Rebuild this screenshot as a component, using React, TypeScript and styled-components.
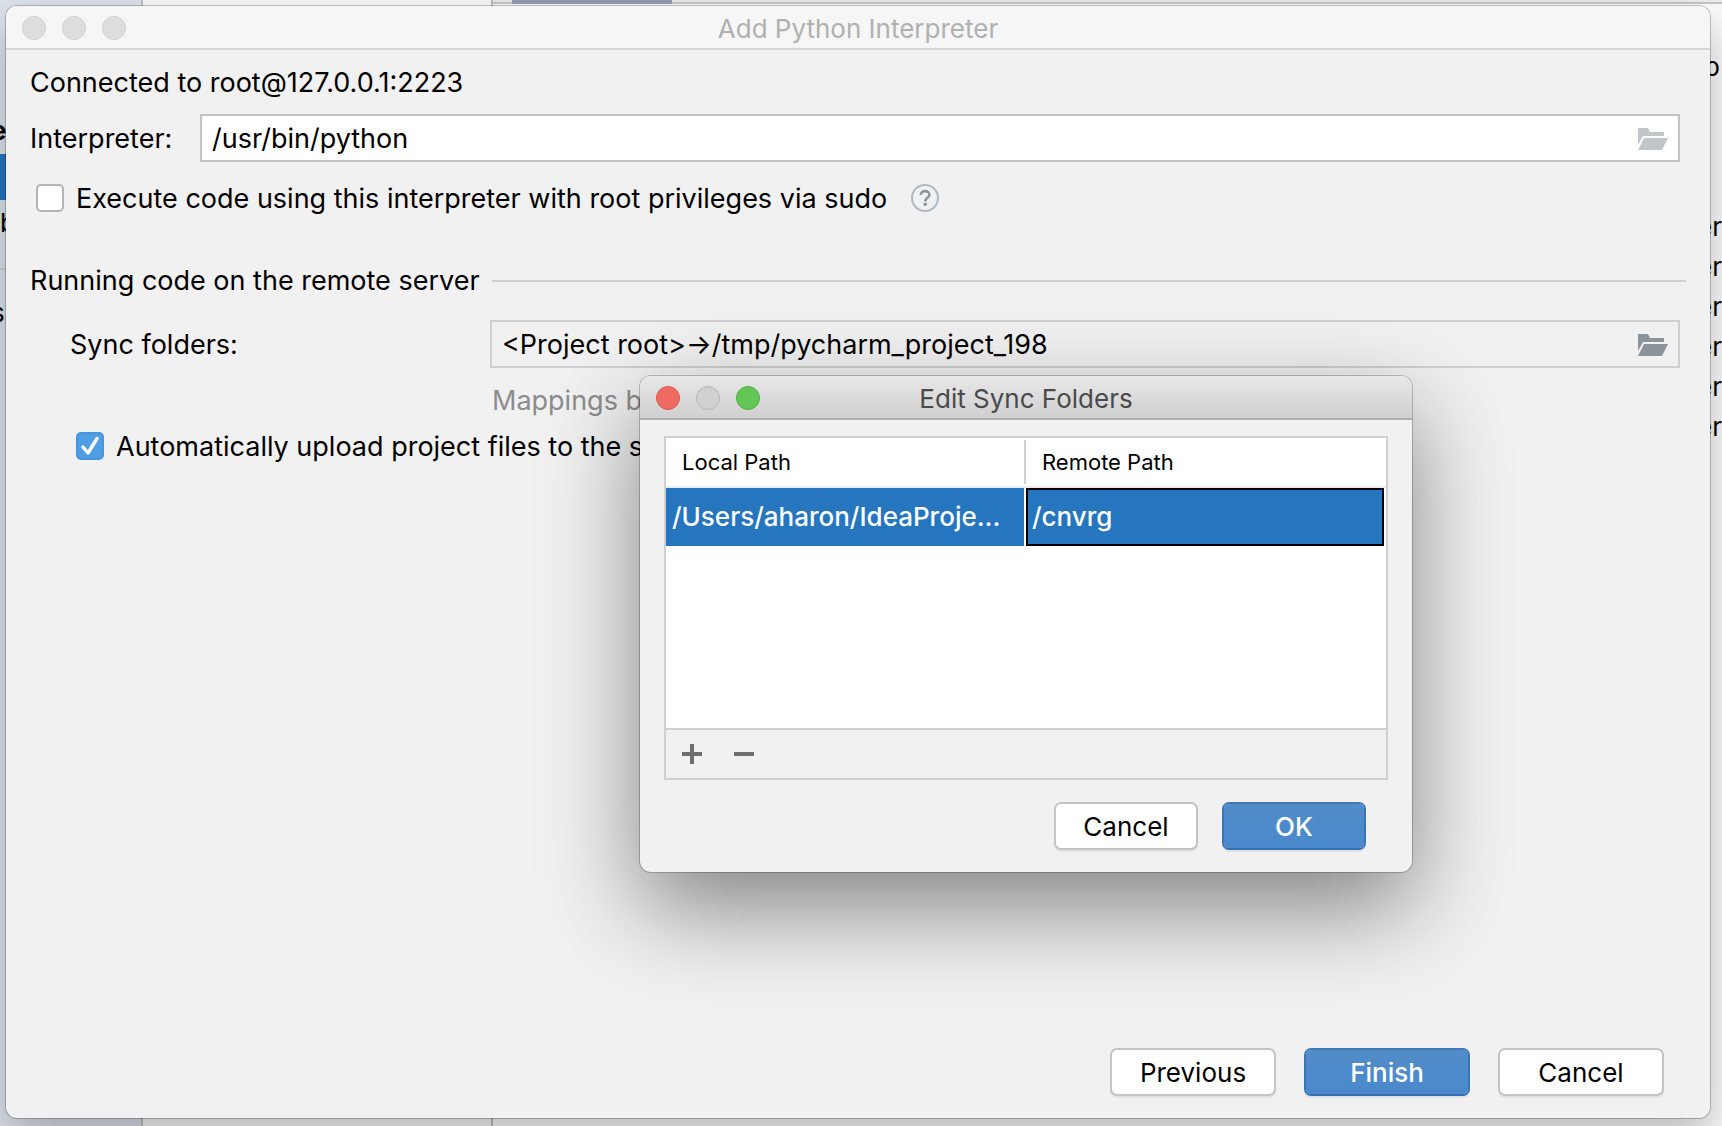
import React from "react";
import styled, { createGlobalStyle, css } from "styled-components";

const GlobalStyle = createGlobalStyle`
  *, *::before, *::after { box-sizing: border-box; }
  body {
    margin: 0;
    overflow: hidden;
    color: #000;
    font: 26px/32px Inter, "Liberation Sans", sans-serif;
  }
  input, button { font: inherit; color: inherit; }
`;

const Desktop = styled.div`
  display: flex;
  position: relative;
  height: 100vh;
  background: #f1f1f1;
`;

const BackSidebar = styled.div`
  width: 143px;
  padding-top: 108px;
  overflow: hidden;
  border-right: 2px solid #c0c0c0;
  background: #dbe2e8;
`;

const SidebarItem = styled.div<{ $selected?: boolean; $bold?: boolean; $scrolled?: boolean }>`
  display: flex;
  align-items: center;
  height: 46px;
  text-indent: ${(p) => (p.$scrolled ? -9 : 0)}px;
  font-weight: ${(p) => (p.$bold ? 700 : 400)};
  background: ${(p) => (p.$selected ? "#2675bf" : "transparent")};
`;

const SidebarRule = styled.div`
  height: 2px;
  margin: 22px 0 20px;
  background: #d0d0d0;
`;

const BackList = styled.div`
  width: 350px;
  border-right: 2px solid #bdbdbd;
  background: #f8f8f8;
`;

const BackPane = styled.div`
  flex: 1;
  overflow: hidden;
  background: #fafafa;
`;

const TabStrip = styled.div`
  height: 4px;
  padding-left: 19px;
  border-bottom: 2px solid #c4c4c4;
  background: #ececec;
`;

const ActiveTab = styled.div`
  width: 160px;
  height: 4px;
  background: #929cb1;
`;

const BackRows = styled.div`
  display: flex;
  flex-direction: column;
  align-items: flex-end;
`;

const BackRow = styled.div<{ $first?: boolean }>`
  height: 40px;
  margin: ${(p) => (p.$first ? "47px 2px 120px 0" : "0")};
`;

const frame = css`
  position: absolute;
  display: flex;
  flex-direction: column;
  overflow: hidden;
  border-radius: 11px;
  background: #f1f1f1;
`;

const MainWindow = styled.main`
  ${frame}
  inset: 6px 12px 8px 6px;
  box-shadow: 0 0 0 1px rgba(0, 0, 0, 0.22), 0 20px 44px rgba(0, 0, 0, 0.26);
`;

const Sheet = styled.section`
  ${frame}
  left: 640px;
  top: 376px;
  width: 772px;
  box-shadow: 0 0 0 1px rgba(0, 0, 0, 0.22), 0 36px 96px rgba(0, 0, 0, 0.46);
`;

const TitleBar = styled.header<{ $active?: boolean }>`
  display: grid;
  grid-template-columns: 1fr auto 1fr;
  align-items: center;
  height: 44px;
  padding: 2px 16px 0;
  color: ${(p) => (p.$active ? "#4a4a4a" : "#b0b0b0")};
  border-bottom: 2px solid ${(p) => (p.$active ? "#aeaeae" : "#d5d5d5")};
  background: ${(p) => (p.$active ? "linear-gradient(#e8e8e8, #cfcfcf)" : "#f6f6f6")};
`;

const Title = styled.h1`
  margin: 0;
  padding-top: 2px;
  font-size: 26px;
  font-weight: 400;
`;

const Lights = styled.div`
  display: flex;
  gap: 16px;
`;

const Light = styled.button<{ $fill: string; $edge: string }>`
  width: 24px;
  height: 24px;
  padding: 0;
  border: 1px solid ${(p) => p.$edge};
  border-radius: 50%;
  background: ${(p) => p.$fill};
`;

const Content = styled.div`
  display: flex;
  flex: 1;
  flex-direction: column;
  padding: 16px 24px 22px;
`;

const Status = styled.p`
  margin: 0;
  padding: 1px 0 15px;
  font-size: 27px;
`;

const Row = styled.div<{ $indent?: boolean }>`
  display: flex;
  align-items: center;
  padding: 0 6px 0 ${(p) => (p.$indent ? 40 : 0)}px;
  font-size: 27px;
`;

const FieldLabel = styled.label<{ $width: number }>`
  flex: 0 0 ${(p) => p.$width}px;
  padding-top: 2px;
`;

const Field = styled.div<{ $muted?: boolean }>`
  display: flex;
  flex: 1;
  align-items: center;
  height: 48px;
  padding: 0 10px;
  border: 2px solid ${(p) => (p.$muted ? "#cfcfcf" : "#c4c4c4")};
  background: ${(p) => (p.$muted ? "transparent" : "#fff")};
`;

const FieldInput = styled.input`
  flex: 1;
  min-width: 0;
  padding: 2px 0 0;
  border: 0;
  outline: 0;
  background: transparent;
`;

const IconButton = styled.button`
  display: flex;
  padding: 0;
  border: 0;
  background: none;
`;

const FolderButton = styled(IconButton)`
  padding-top: 2px;
`;

const CheckRow = styled.div<{ $indent?: boolean }>`
  display: flex;
  align-items: center;
  gap: 12px;
  height: 32px;
  padding-left: ${(p) => (p.$indent ? 46 : 6)}px;
  font-size: 27px;
`;

const CheckLabel = styled.label`
  padding-top: 2px;
  white-space: nowrap;
`;

const CheckBox = styled.input`
  appearance: none;
  width: 28px;
  height: 28px;
  margin: 0;
  border: 2px solid #b4b4b4;
  border-radius: 5px;
  background: #fff;

  &:checked {
    border-color: #4695dd;
    background: #4f9ee3;
  }
`;

const CheckHolder = styled.span`
  display: grid;
  flex: none;

  > * { grid-area: 1 / 1; }
  > svg { pointer-events: none; }
`;

const HelpButton = styled(IconButton)`
  margin-left: 12px;
`;

const SectionHeading = styled.h2`
  display: flex;
  align-items: center;
  gap: 12px;
  margin: 51px 0 23px;
  font-size: 27px;
  font-weight: 400;

  &::after {
    content: "";
    flex: 1;
    height: 2px;
    background: #cfcfcf;
  }
`;

const Hint = styled.p`
  margin: 0;
  padding: 17px 0 13px 462px;
  color: #8c8c8c;
  font-size: 27px;
  white-space: nowrap;
`;

const Actions = styled.footer<{ $gap: number }>`
  display: flex;
  justify-content: flex-end;
  gap: ${(p) => p.$gap}px;
  margin-top: auto;
  padding-right: 22px;
`;

const Button = styled.button<{ $primary?: boolean; $width: number }>`
  width: ${(p) => p.$width}px;
  height: 48px;
  padding: 2px 0 0;
  border: 2px solid #c4c4c4;
  border-radius: 7px;
  background: #fff;
  box-shadow: 0 2px 0 rgba(0, 0, 0, 0.06);

  ${(p) =>
    p.$primary &&
    css`
      color: #fff;
      font-weight: 500;
      border-color: #4079b8 #3a75b6 #346fb3;
      background: linear-gradient(#528cc7, #4989cc) padding-box;
    `}
`;

const SheetBody = styled.div`
  display: flex;
  flex-direction: column;
  gap: 22px;
  padding: 16px 24px 22px;
`;

const TablePanel = styled.div`
  border: 2px solid #d0d0d0;
`;

const TableArea = styled.div`
  height: 290px;
  background: #fff;
`;

const PathTable = styled.table`
  width: 100%;
  table-layout: fixed;
  border-spacing: 0;
`;

const HeadCell = styled.th`
  height: 50px;
  padding: 2px 0;
  font-size: 22px;
  font-weight: 400;
  line-height: 44px;
  text-align: left;
  border-bottom: 2px solid #ececec;
`;

const HeadLabel = styled.div<{ $divided?: boolean }>`
  padding-left: 16px;
  border-right: ${(p) => (p.$divided ? "2px solid #d0d0d0" : "0")};
`;

const Cell = styled.td`
  height: 58px;
  padding: 0;
  color: #fff;
  font-weight: 500;
  border-right: 2px solid #fff;
`;

const CellBox = styled.div<{ $focused?: boolean }>`
  height: 58px;
  padding: 0 4px;
  overflow: hidden;
  line-height: 54px;
  text-overflow: ellipsis;
  white-space: nowrap;
  border: 2px solid ${(p) => (p.$focused ? "#000" : "#2675bf")};
  background: #2675bf;
`;

const TableTools = styled.div`
  display: flex;
  align-items: center;
  gap: 32px;
  height: 50px;
  padding-left: 16px;
  border-top: 2px solid #d0d0d0;
`;

const FolderIcon = ({ color }: { color: string }) => (
  <svg width="30" height="22" viewBox="0 0 30 22" fill={color} aria-hidden="true">
    <path d="M0 0h10l2 4h14v4H5L0 17z" />
    <path d="M6 10h24l-6 12H0z" />
  </svg>
);

const HelpIcon = () => (
  <svg width="28" height="28" viewBox="0 0 28 28" fill="none" aria-hidden="true">
    <circle cx="14" cy="14" r="13" stroke="#afb9c1" strokeWidth="2" />
    <path
      d="M9.8 11c0-2.4 1.8-3.9 4.3-3.9s4.3 1.5 4.3 3.7c0 3-4.2 3.1-4.2 6.6"
      stroke="#8a949c"
      strokeWidth="2.6"
    />
    <rect x="12.6" y="18.8" width="3.2" height="3" fill="#8a949c" />
  </svg>
);

const TickIcon = () => (
  <svg width="28" height="28" viewBox="0 0 28 28" fill="none" aria-hidden="true">
    <path d="M7 15l5 6L21 6.5" stroke="#fff" strokeWidth="3.4" strokeLinecap="round" strokeLinejoin="round" />
  </svg>
);

const PlusIcon = () => (
  <svg width="20" height="20" viewBox="0 0 20 20" fill="#6e6e6e" aria-hidden="true">
    <path d="M8 0h4v8h8v4h-8v8H8v-8H0V8h8z" />
  </svg>
);

const MinusIcon = () => (
  <svg width="20" height="20" viewBox="0 0 20 20" fill="#6e6e6e" aria-hidden="true">
    <path d="M0 8h20v4H0z" />
  </svg>
);

const FieldGroup = styled.div`
  display: flex;
  flex-direction: column;
  gap: 20px;
`;

const idle = { $fill: "#dedede", $edge: "#cfcfcf" };

export default function App() {
  return (
    <>
      <GlobalStyle />
      <Desktop>
        <BackSidebar>
          <SidebarItem $bold $scrolled>e</SidebarItem>
          <SidebarItem $selected />
          <SidebarItem>b</SidebarItem>
          <SidebarRule />
          <SidebarItem $scrolled>s</SidebarItem>
        </BackSidebar>
        <BackList />
        <BackPane>
          <TabStrip>
            <ActiveTab />
          </TabStrip>
          <BackRows>
            <BackRow $first>p</BackRow>
            {[0, 1, 2, 3, 4, 5].map((n) => (
              <BackRow key={n}>er</BackRow>
            ))}
          </BackRows>
        </BackPane>

        <MainWindow>
          <TitleBar>
            <Lights>
              <Light {...idle} aria-label="Close" />
              <Light {...idle} aria-label="Minimize" />
              <Light {...idle} aria-label="Zoom" />
            </Lights>
            <Title>Add Python Interpreter</Title>
          </TitleBar>
          <Content>
            <Status>Connected to root@127.0.0.1:2223</Status>
            <FieldGroup>
              <Row>
                <FieldLabel $width={170} htmlFor="interpreter">Interpreter:</FieldLabel>
                <Field>
                  <FieldInput id="interpreter" defaultValue="/usr/bin/python" />
                  <FolderButton aria-label="Browse interpreter">
                    <FolderIcon color="#c1c6ca" />
                  </FolderButton>
                </Field>
              </Row>
              <CheckRow>
                <CheckBox type="checkbox" id="sudo" />
                <CheckLabel htmlFor="sudo">
                  Execute code using this interpreter with root privileges via sudo
                </CheckLabel>
                <HelpButton aria-label="Help">
                  <HelpIcon />
                </HelpButton>
              </CheckRow>
            </FieldGroup>
            <SectionHeading>Running code on the remote server</SectionHeading>
            <Row $indent>
              <FieldLabel $width={420} htmlFor="sync">Sync folders:</FieldLabel>
              <Field $muted>
                <FieldInput id="sync" readOnly defaultValue="<Project root>→/tmp/pycharm_project_198" />
                <FolderButton aria-label="Edit sync folders">
                  <FolderIcon color="#8c949b" />
                </FolderButton>
              </Field>
            </Row>
            <Hint>Mappings b</Hint>
            <CheckRow $indent>
              <CheckHolder>
                <CheckBox type="checkbox" id="upload" defaultChecked />
                <TickIcon />
              </CheckHolder>
              <CheckLabel htmlFor="upload">Automatically upload project files to the s</CheckLabel>
            </CheckRow>
            <Actions $gap={28}>
              <Button $width={166}>Previous</Button>
              <Button $width={166} $primary>Finish</Button>
              <Button $width={166}>Cancel</Button>
            </Actions>
          </Content>
        </MainWindow>

        <Sheet role="dialog" aria-labelledby="sheet-title">
          <TitleBar $active>
            <Lights>
              <Light $fill="#ed6b60" $edge="#d9584e" aria-label="Close" />
              <Light $fill="#d0d0d0" $edge="#b4b4b4" aria-label="Minimize" />
              <Light $fill="#62c655" $edge="#50ae45" aria-label="Zoom" />
            </Lights>
            <Title id="sheet-title">Edit Sync Folders</Title>
          </TitleBar>
          <SheetBody>
            <TablePanel>
              <TableArea>
                <PathTable>
                  <thead>
                    <tr>
                      <HeadCell><HeadLabel $divided>Local Path</HeadLabel></HeadCell>
                      <HeadCell><HeadLabel>Remote Path</HeadLabel></HeadCell>
                    </tr>
                  </thead>
                  <tbody>
                    <tr>
                      <Cell><CellBox>/Users/aharon/IdeaProje...</CellBox></Cell>
                      <Cell><CellBox $focused>/cnvrg</CellBox></Cell>
                    </tr>
                  </tbody>
                </PathTable>
              </TableArea>
              <TableTools>
                <IconButton aria-label="Add mapping"><PlusIcon /></IconButton>
                <IconButton aria-label="Remove mapping"><MinusIcon /></IconButton>
              </TableTools>
            </TablePanel>
            <Actions $gap={24}>
              <Button $width={144}>Cancel</Button>
              <Button $width={144} $primary>OK</Button>
            </Actions>
          </SheetBody>
        </Sheet>
      </Desktop>
    </>
  );
}
